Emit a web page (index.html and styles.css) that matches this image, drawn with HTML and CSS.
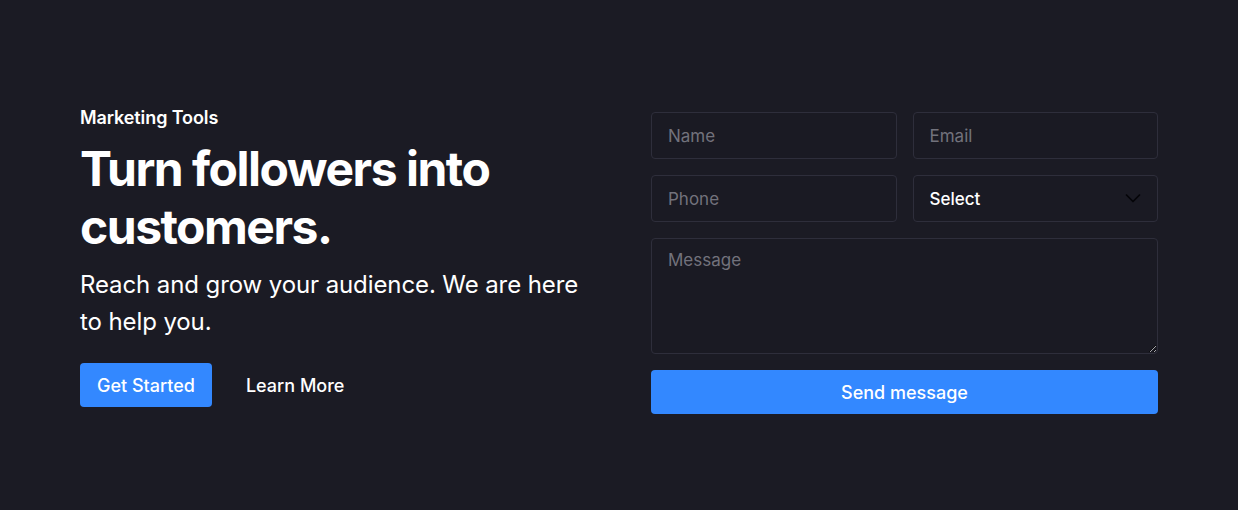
FILE: index.html
```html
<!DOCTYPE html>
<html lang="en">
<head>
<meta charset="utf-8">
<title>Marketing Tools</title>
<link rel="stylesheet" href="styles.css">
</head>
<body>
<section class="hero">
  <div class="intro">
    <p class="eyebrow">Marketing Tools</p>
    <h1 class="title">Turn followers into customers.</h1>
    <p class="lead">Reach and grow your audience. We are here to help you.</p>
    <div class="actions">
      <a class="btn btn-primary" href="#">Get Started</a>
      <a class="btn btn-link" href="#">Learn More</a>
    </div>
  </div>
  <form class="form">
    <input class="field" type="text" placeholder="Name">
    <input class="field" type="email" placeholder="Email">
    <input class="field" type="tel" placeholder="Phone">
    <div class="select-wrap">
      <select class="field select">
        <option>Select</option>
      </select>
      <svg class="chevron" width="16" height="16" viewBox="0 0 16 16" fill="none"><path d="M1.5 5l6.5 6.5L14.5 5" stroke="#050508" stroke-width="1.7" stroke-linecap="round" stroke-linejoin="round"/></svg>
    </div>
    <textarea class="field area" placeholder="Message"></textarea>
    <button class="send" type="button">Send message</button>
  </form>
</section>
</body>
</html>
```
FILE: styles.css
```css
* { box-sizing: border-box; }
html, body { margin: 0; padding: 0; }
body {
  background: #1b1b24;
  color: #ffffff;
  font-family: Inter, "Noto Sans", sans-serif;
  height: 510px;
}
.hero {
  display: grid;
  grid-template-columns: 1fr 1fr;
  column-gap: 64px;
  padding: 106px 80px 0;
  align-items: start;
}
.eyebrow {
  margin: 0;
  font-size: 18px;
  font-weight: 600;
  line-height: 24px;
  letter-spacing: -0.1px;
}
.title {
  margin: 10px 0 0;
  font-size: 48px;
  font-weight: 700;
  line-height: 58px;
  letter-spacing: -1.5px;
  max-width: 460px;
}
.lead {
  margin: 10px 0 0;
  font-size: 24px;
  line-height: 37px;
  font-weight: 400;
  letter-spacing: -0.1px;
}
.actions {
  display: flex;
  margin-top: 23px;
}
.btn {
  display: inline-flex;
  align-items: center;
  height: 44px;
  padding: 0 17px;
  font-size: 18px;
  font-weight: 500;
  color: #fff;
  text-decoration: none;
  border-radius: 4px;
}
.btn-primary { background: #3388ff; margin-right: 17px; }
.btn-link { background: transparent; }
.form {
  display: grid;
  grid-template-columns: 1fr 1fr;
  gap: 16px;
  padding-top: 6px;
}
.field {
  width: 100%;
  height: 47px;
  background: #1a1a23;
  border: 1px solid #2e2e3b;
  border-radius: 4px;
  padding: 0 16px;
  font-family: Inter, "Noto Sans", sans-serif;
  font-size: 17px;
  color: #fff;
  outline: none;
}
.field::placeholder { color: #72727c; }
.select-wrap { position: relative; }
.select {
  appearance: none;
  -webkit-appearance: none;
  font-weight: 500;
}
.chevron {
  position: absolute;
  right: 17px;
  top: 15px;
  pointer-events: none;
}
.area {
  grid-column: 1 / -1;
  height: 116px;
  padding-top: 11px;
  resize: vertical;
}
.send {
  grid-column: 1 / -1;
  height: 44px;
  background: #3388ff;
  color: #fff;
  border: none;
  border-radius: 4px;
  font-family: Inter, "Noto Sans", sans-serif;
  font-size: 18px;
  font-weight: 500;
}
```
